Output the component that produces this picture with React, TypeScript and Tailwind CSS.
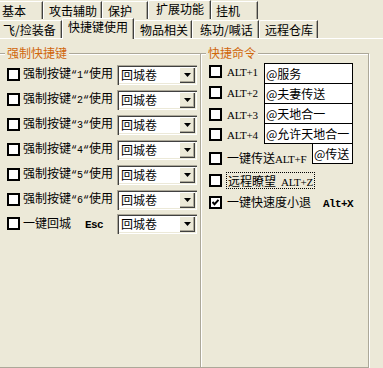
import React from "react";

const cjk = "font-['Noto_Sans_CJK_SC','Noto_Sans_CJK_JP',sans-serif]";

function Box({ checked = false }: { checked?: boolean }) {
  return (
    <span className="w-[13px] h-[13px] shrink-0 border-2 border-black bg-white flex items-center justify-center">
      {checked && (
        <svg width="7" height="7" viewBox="0 0 7 7">
          <path d="M0.5 3 L2.5 5.2 L6.5 0.8" stroke="#000" strokeWidth="2" fill="none" />
        </svg>
      )}
    </span>
  );
}

function Combo() {
  return (
    <div className="w-[80px] h-[20px] flex items-stretch p-[2px] bg-white shadow-[inset_1px_1px_0_#aca899,inset_2px_2px_0_#404040,inset_-1px_-1px_0_#ffffff,inset_-2px_-2px_0_#ece9d8]">
      <span className="flex-1 pl-[2px] leading-[16px]">回城卷</span>
      <span className="w-[16px] bg-[#ece9d8] flex items-center justify-center shadow-[inset_1px_1px_0_#ffffff,inset_-1px_-1px_0_#404040,inset_-2px_-2px_0_#aca899]">
        <svg width="7" height="4" viewBox="0 0 7 4">
          <polygon points="0,0 7,0 3.5,4" fill="#000" />
        </svg>
      </span>
    </div>
  );
}

const mono = "font-['Liberation_Mono',monospace] text-[11px] tracking-[-0.6px]";
const serif = "font-['Liberation_Serif',serif] text-[11px] tracking-[-0.3px]";

const forceRows = ["1", "2", "3", "4", "5", "6"];

const cmdRows = [
  { key: "ALT+1", text: "@服务", pad: "mt-[2px]" },
  { key: "ALT+2", text: "@夫妻传送", pad: "mt-[3px]" },
  { key: "ALT+3", text: "@天地合一", pad: "mt-[5px]" },
  { key: "ALT+4", text: "@允许天地合一", pad: "mt-[5px]" },
];

export default function App() {
  return (
    <div className={`w-[383px] h-[368px] overflow-hidden bg-[#ece9d8] text-[12px] leading-[14px] text-black ${cjk}`}>
      {/* outer tab strip */}
      <div className="flex items-end h-[19px]">
        <div className="-ml-[4px] w-[47px] h-[18px] pl-[5px] pt-[2px] border-t border-l border-white border-r border-r-[#404040] shadow-[inset_-1px_0_0_#aca899] rounded-tl-[2px]">基本</div>
        <div className="w-[59px] h-[18px] pl-[5px] pt-[2px] border-t border-l border-white border-r border-r-[#404040] shadow-[inset_-1px_0_0_#aca899] rounded-tl-[2px]">攻击辅助</div>
        <div className="w-[46px] h-[18px] pl-[5px] pt-[2px] border-t border-l border-white border-r border-r-[#404040] shadow-[inset_-1px_0_0_#aca899] rounded-tl-[2px]">保护</div>
        <div className="w-[63px] h-[19px] pl-[7px] pt-[1px] border-t border-l border-white border-r border-r-[#404040] shadow-[inset_-1px_0_0_#aca899] rounded-tl-[2px]">扩展功能</div>
        <div className="w-[47px] h-[18px] pl-[4px] pt-[2px] border-t border-l border-white border-r border-r-[#404040] shadow-[inset_-1px_0_0_#aca899] rounded-tl-[2px]">挂机</div>
      </div>

      {/* inner tab strip */}
      <div className="relative z-10 flex items-end h-[19px]">
        <div className="-ml-[3px] w-[65px] h-[18px] pl-[5px] pt-[2px] border-t border-l border-white border-r border-r-[#404040] shadow-[inset_-1px_0_0_#aca899] rounded-tl-[2px]">飞/捡装备</div>
        <div className="w-[72px] h-[21px] -mb-px pl-[5px] pt-[1px] bg-[#ece9d8] border-t border-l border-white border-r border-r-[#404040] shadow-[inset_-1px_0_0_#aca899] rounded-tl-[2px]">快捷键使用</div>
        <div className="w-[58px] h-[18px] pl-[5px] pt-[2px] border-t border-l border-white border-r border-r-[#404040] shadow-[inset_-1px_0_0_#aca899] rounded-tl-[2px]">物品相关</div>
        <div className="w-[67px] h-[18px] pl-[7px] pt-[2px] border-t border-l border-white border-r border-r-[#404040] shadow-[inset_-1px_0_0_#aca899] rounded-tl-[2px]">练功/喊话</div>
        <div className="w-[59px] h-[18px] pl-[5px] pt-[2px] border-t border-l border-white border-r border-r-[#404040] shadow-[inset_-1px_0_0_#aca899] rounded-tl-[2px]">远程仓库</div>
      </div>

      {/* page */}
      <div className="flex border-t border-white h-[330px]">
        <fieldset className="-ml-[3px] mt-[7px] w-[203px] h-[322px] border border-r-0 border-[#aca899] shadow-[inset_1px_1px_0_#ffffff,0_1px_0_#ffffff]">
          <legend className="ml-[7px] px-[2px] bg-[#ece9d8] text-[#d0660a]">强制快捷键</legend>
          <div className="flex flex-col pl-[9px] mt-[2px]">
            {forceRows.map((n) => (
              <div key={n} className="flex items-center h-[25px]">
                <Box />
                <span className="ml-[3px] w-[94px] whitespace-nowrap">
                  强制按键<span className="font-['Liberation_Mono',monospace] text-[10px]">“{n}“</span>使用
                </span>
                <Combo />
              </div>
            ))}
            <div className="flex items-center h-[23px]">
              <Box />
              <span className="ml-[3px] w-[94px] whitespace-nowrap">
                一键回城
                <span className="ml-[14px] font-['Liberation_Mono',monospace] text-[11px] font-bold tracking-[-0.6px]">Esc</span>
              </span>
              <Combo />
            </div>
          </div>
        </fieldset>

        <fieldset className="mt-[7px] w-[169px] h-[322px] border border-[#aca899] shadow-[inset_1px_1px_0_#ffffff,1px_1px_0_#ffffff]">
          <legend className="ml-[5px] px-[2px] bg-[#ece9d8] text-[#d0660a]">快捷命令</legend>
          <div className="flex flex-col pl-[8px] mt-[3px]">
            {cmdRows.map((r, i) => (
              <div key={r.key} className={`flex h-[21px] ${i > 0 ? "-mt-px" : ""}`}>
                <div className={`flex items-center w-[55px] h-[13px] ${r.pad}`}>
                  <Box />
                  <span className={`relative top-[1px] ml-[5px] leading-[13px] ${serif}`}>{r.key}</span>
                </div>
                <div className="w-[89px] h-[21px] border border-black bg-white pl-[1px] leading-[19px] whitespace-nowrap">{r.text}</div>
              </div>
            ))}
            <div className="flex h-[21px] -mt-px">
              <div className="flex items-center w-[103px] h-[13px] mt-[9px]">
                <Box />
                <span className="ml-[5px] whitespace-nowrap">
                  一键传送<span className={serif}>ALT+F</span>
                </span>
              </div>
              <div className="w-[41px] h-[21px] border border-black bg-white pl-[1px] leading-[19px]">@传送</div>
            </div>
            <div className="flex items-center h-[17px] mt-[8px]">
              <Box />
              <span className="ml-[4px] h-[17px] px-px border border-dotted border-black leading-[15px] whitespace-nowrap">
                远程瞭望<span className={`ml-[5px] ${serif}`}>ALT+Z</span>
              </span>
            </div>
            <div className="flex items-center h-[17px] mt-[5px]">
              <Box checked />
              <span className="ml-[5px] whitespace-nowrap">
                一键快速度小退<span className={`ml-[12px] font-bold ${mono}`}>Alt+X</span>
              </span>
            </div>
          </div>
        </fieldset>
      </div>
    </div>
  );
}
